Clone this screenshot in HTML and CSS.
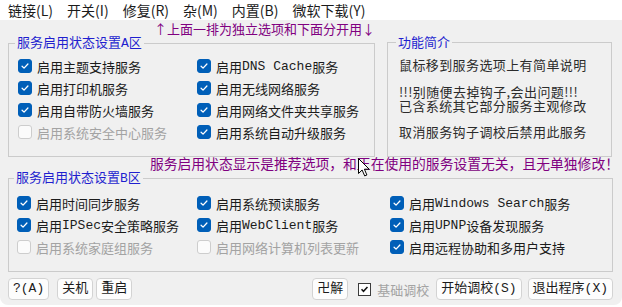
FILE: index.html
```html
<!DOCTYPE html>
<html lang="zh-CN">
<head>
<meta charset="utf-8">
<title>服务调校</title>
<link rel="stylesheet" href="styles.css">
</head>
<body>
<div class="window">
  <nav class="menubar">
    <span class="menu">链接(L)</span>
    <span class="menu">开关(I)</span>
    <span class="menu">修复(R)</span>
    <span class="menu">杂(M)</span>
    <span class="menu">内置(B)</span>
    <span class="menu">微软下载(Y)</span>
  </nav>
  <main class="main">
    <div class="note note-top">↑上面一排为独立选项和下面分开用↓</div>
    <div class="top-row">
      <fieldset class="group group-a">
        <legend>服务启用状态设置<span class="lat">A</span>区</legend>
        <div class="opts cols-2">
          <label class="opt"><span class="cb on"><svg viewBox="0 0 14 14"><path d="M3.6 7.3 L5.9 9.5 L10.4 4.7"/></svg></span>启用主题支持服务</label>
          <label class="opt"><span class="cb on"><svg viewBox="0 0 14 14"><path d="M3.6 7.3 L5.9 9.5 L10.4 4.7"/></svg></span>启用<span class="lat">DNS Cache</span>服务</label>
          <label class="opt"><span class="cb on"><svg viewBox="0 0 14 14"><path d="M3.6 7.3 L5.9 9.5 L10.4 4.7"/></svg></span>启用打印机服务</label>
          <label class="opt"><span class="cb on"><svg viewBox="0 0 14 14"><path d="M3.6 7.3 L5.9 9.5 L10.4 4.7"/></svg></span>启用无线网络服务</label>
          <label class="opt"><span class="cb on"><svg viewBox="0 0 14 14"><path d="M3.6 7.3 L5.9 9.5 L10.4 4.7"/></svg></span>启用自带防火墙服务</label>
          <label class="opt"><span class="cb on"><svg viewBox="0 0 14 14"><path d="M3.6 7.3 L5.9 9.5 L10.4 4.7"/></svg></span>启用网络文件夹共享服务</label>
          <label class="opt off"><span class="cb"></span>启用系统安全中心服务</label>
          <label class="opt"><span class="cb on"><svg viewBox="0 0 14 14"><path d="M3.6 7.3 L5.9 9.5 L10.4 4.7"/></svg></span>启用系统自动升级服务</label>
        </div>
      </fieldset>
      <fieldset class="group group-info">
        <legend>功能简介</legend>
        <p class="info">鼠标移到服务选项上有简单说明</p>
        <p class="info info-warn">!!!别随便去掉钩子,会出问题!!!</p>
        <p class="info info-tight">已含系统其它部分服务主观修改</p>
        <p class="info">取消服务钩子调校后禁用此服务</p>
      </fieldset>
    </div>
    <div class="note note-mid">服务启用状态显示是推荐选项，和正在使用的服务设置无关，且无单独修改！</div>
    <fieldset class="group group-b">
      <legend>服务启用状态设置<span class="lat">B</span>区</legend>
      <div class="opts cols-3">
        <label class="opt"><span class="cb on"><svg viewBox="0 0 14 14"><path d="M3.6 7.3 L5.9 9.5 L10.4 4.7"/></svg></span>启用时间同步服务</label>
        <label class="opt"><span class="cb on"><svg viewBox="0 0 14 14"><path d="M3.6 7.3 L5.9 9.5 L10.4 4.7"/></svg></span>启用系统预读服务</label>
        <label class="opt"><span class="cb on"><svg viewBox="0 0 14 14"><path d="M3.6 7.3 L5.9 9.5 L10.4 4.7"/></svg></span>启用<span class="lat">Windows Search</span>服务</label>
        <label class="opt"><span class="cb on"><svg viewBox="0 0 14 14"><path d="M3.6 7.3 L5.9 9.5 L10.4 4.7"/></svg></span>启用<span class="lat">IPSec</span>安全策略服务</label>
        <label class="opt"><span class="cb on"><svg viewBox="0 0 14 14"><path d="M3.6 7.3 L5.9 9.5 L10.4 4.7"/></svg></span>启用<span class="lat">WebClient</span>服务</label>
        <label class="opt"><span class="cb on"><svg viewBox="0 0 14 14"><path d="M3.6 7.3 L5.9 9.5 L10.4 4.7"/></svg></span>启用<span class="lat">UPNP</span>设备发现服务</label>
        <label class="opt off"><span class="cb"></span>启用系统家庭组服务</label>
        <label class="opt off"><span class="cb"></span>启用网络计算机列表更新</label>
        <label class="opt"><span class="cb on"><svg viewBox="0 0 14 14"><path d="M3.6 7.3 L5.9 9.5 L10.4 4.7"/></svg></span>启用远程协助和多用户支持</label>
      </div>
    </fieldset>
    <div class="bottombar">
      <button class="btn">?(A)</button>
      <button class="btn btn-gap">关机</button>
      <button class="btn btn-tight">重启</button>
      <button class="btn push">卍解</button>
      <label class="classic"><span class="ccb"><svg viewBox="0 0 13 13"><path d="M3 6.2 L5.3 8.6 L10 3.6"/></svg></span>基础调校</label>
      <button class="btn btn-wide">开始调校(S)</button>
      <button class="btn btn-wide2">退出程序(X)</button>
    </div>
  </main>
  <svg class="cursor" viewBox="0 0 12 19" width="12" height="19"><path d="M0.5 0.5 L0.5 15.5 L4.1 12 L6.7 17.9 L8.9 17 L6.4 11.2 L11.2 11.2 Z"/></svg>
</div>
</body>
</html>
```
FILE: styles.css
```css
* { box-sizing: border-box; }
html, body { margin: 0; background: #ffffff; }
body {
  font-family: "Noto Sans CJK SC", "Microsoft YaHei", sans-serif;
  font-size: 13px;
  color: #1b1b1b;
}
.window {
  position: relative;
  width: 622px;
  height: 305px;
  background: #f0f0f0;
  border-radius: 0 0 8px 8px;
  overflow: hidden;
}
.menubar {
  display: flex;
  align-items: center;
  gap: 14px;
  height: 20px;
  padding-left: 8px;
  background: #ffffff;
  font-size: 14px;
  line-height: 18px;
  white-space: nowrap;
}
.main { padding: 0 9px 0 8px; }
.note {
  color: #800080;
  white-space: nowrap;
}
.note-top {
  width: 367px;
  height: 15px;
  padding-top: 2px;
  font-size: 13px;
  line-height: 13px;
  text-align: right;
}
.note-mid {
  height: 13px;
  font-size: 13.8px;
  line-height: 13px;
  text-align: right;
  margin-right: -6px;
}
.top-row {
  display: grid;
  grid-template-columns: 367px 225px;
  column-gap: 12px;
}
.group {
  margin: 0;
  min-width: 0;
  border: 1px solid #cbcbcb;
  padding: 4px 8px 13px 9px;
}
.group legend {
  color: #1f1fcf;
  padding: 0 2px;
  margin-left: -3px;
  line-height: 14px;
  font-size: 13px;
}
.lat { font-family: "Liberation Mono", "DejaVu Sans Mono", monospace; }
.opts { display: grid; }
.cols-2 { grid-template-columns: 179px 1fr; }
.cols-3 { grid-template-columns: 180px 193px 1fr; }
.group-b { padding: 6px 8px 13px 8px; }
.opt {
  display: flex;
  align-items: center;
  height: 22px;
  white-space: nowrap;
}
.opt.off { color: #a3a3a3; }
.cb {
  flex: none;
  width: 14px;
  height: 14px;
  margin-right: 5px;
  border-radius: 3px;
  border: 1px solid #cdcdcd;
  background: #fbfbfb;
}
.cb.on {
  background: #005fb8;
  border-color: #005fb8;
}
.cb svg { display: block; width: 12px; height: 12px; }
.cb path, .ccb path { fill: none; stroke: #ffffff; stroke-width: 1.5; stroke-linecap: round; stroke-linejoin: round; }
.group-info { padding: 9px 4px 10px 11px; }
.info {
  margin: 0 0 13px 0;
  font-size: 13px;
  letter-spacing: 0.4px;
  line-height: 14px;
  color: #2b2b2b;
  white-space: nowrap;
}
.info-warn { margin-bottom: 0; }
.info-tight { margin-bottom: 12px; }
.info:last-child { margin-bottom: 0; }
.bottombar {
  display: flex;
  align-items: center;
  margin-top: 6px;
  height: 22px;
}
.btn {
  height: 22px;
  padding: 0 4px;
  margin: 0;
  background: #fdfdfd;
  border: 1px solid #d3d3d3;
  border-radius: 4px;
  font-family: "Liberation Mono", "Noto Sans CJK SC", monospace;
  font-size: 13px;
  color: #1b1b1b;
  line-height: 20px;
  white-space: nowrap;
}
.btn-gap { margin-left: 8px; }
.btn-tight { margin-left: 3px; }
.push { margin-left: auto; }
.classic {
  display: flex;
  align-items: center;
  margin-left: 10px;
  color: #a3a3a3;
  white-space: nowrap;
}
.ccb {
  width: 13px;
  height: 13px;
  margin-right: 6px;
  border: 1px solid #3c3c3c;
  background: #ffffff;
}
.ccb svg { display: block; width: 11px; height: 11px; }
.ccb path { stroke: #111111; stroke-width: 1.8; stroke-linecap: butt; stroke-linejoin: miter; }
.btn-wide { margin-left: 7px; }
.btn-wide2 { margin-left: 6px; }
.cursor {
  position: absolute;
  left: 358px;
  top: 158px;
}
.cursor path { fill: #ffffff; stroke: #000000; stroke-width: 1; stroke-linejoin: round; }
```
